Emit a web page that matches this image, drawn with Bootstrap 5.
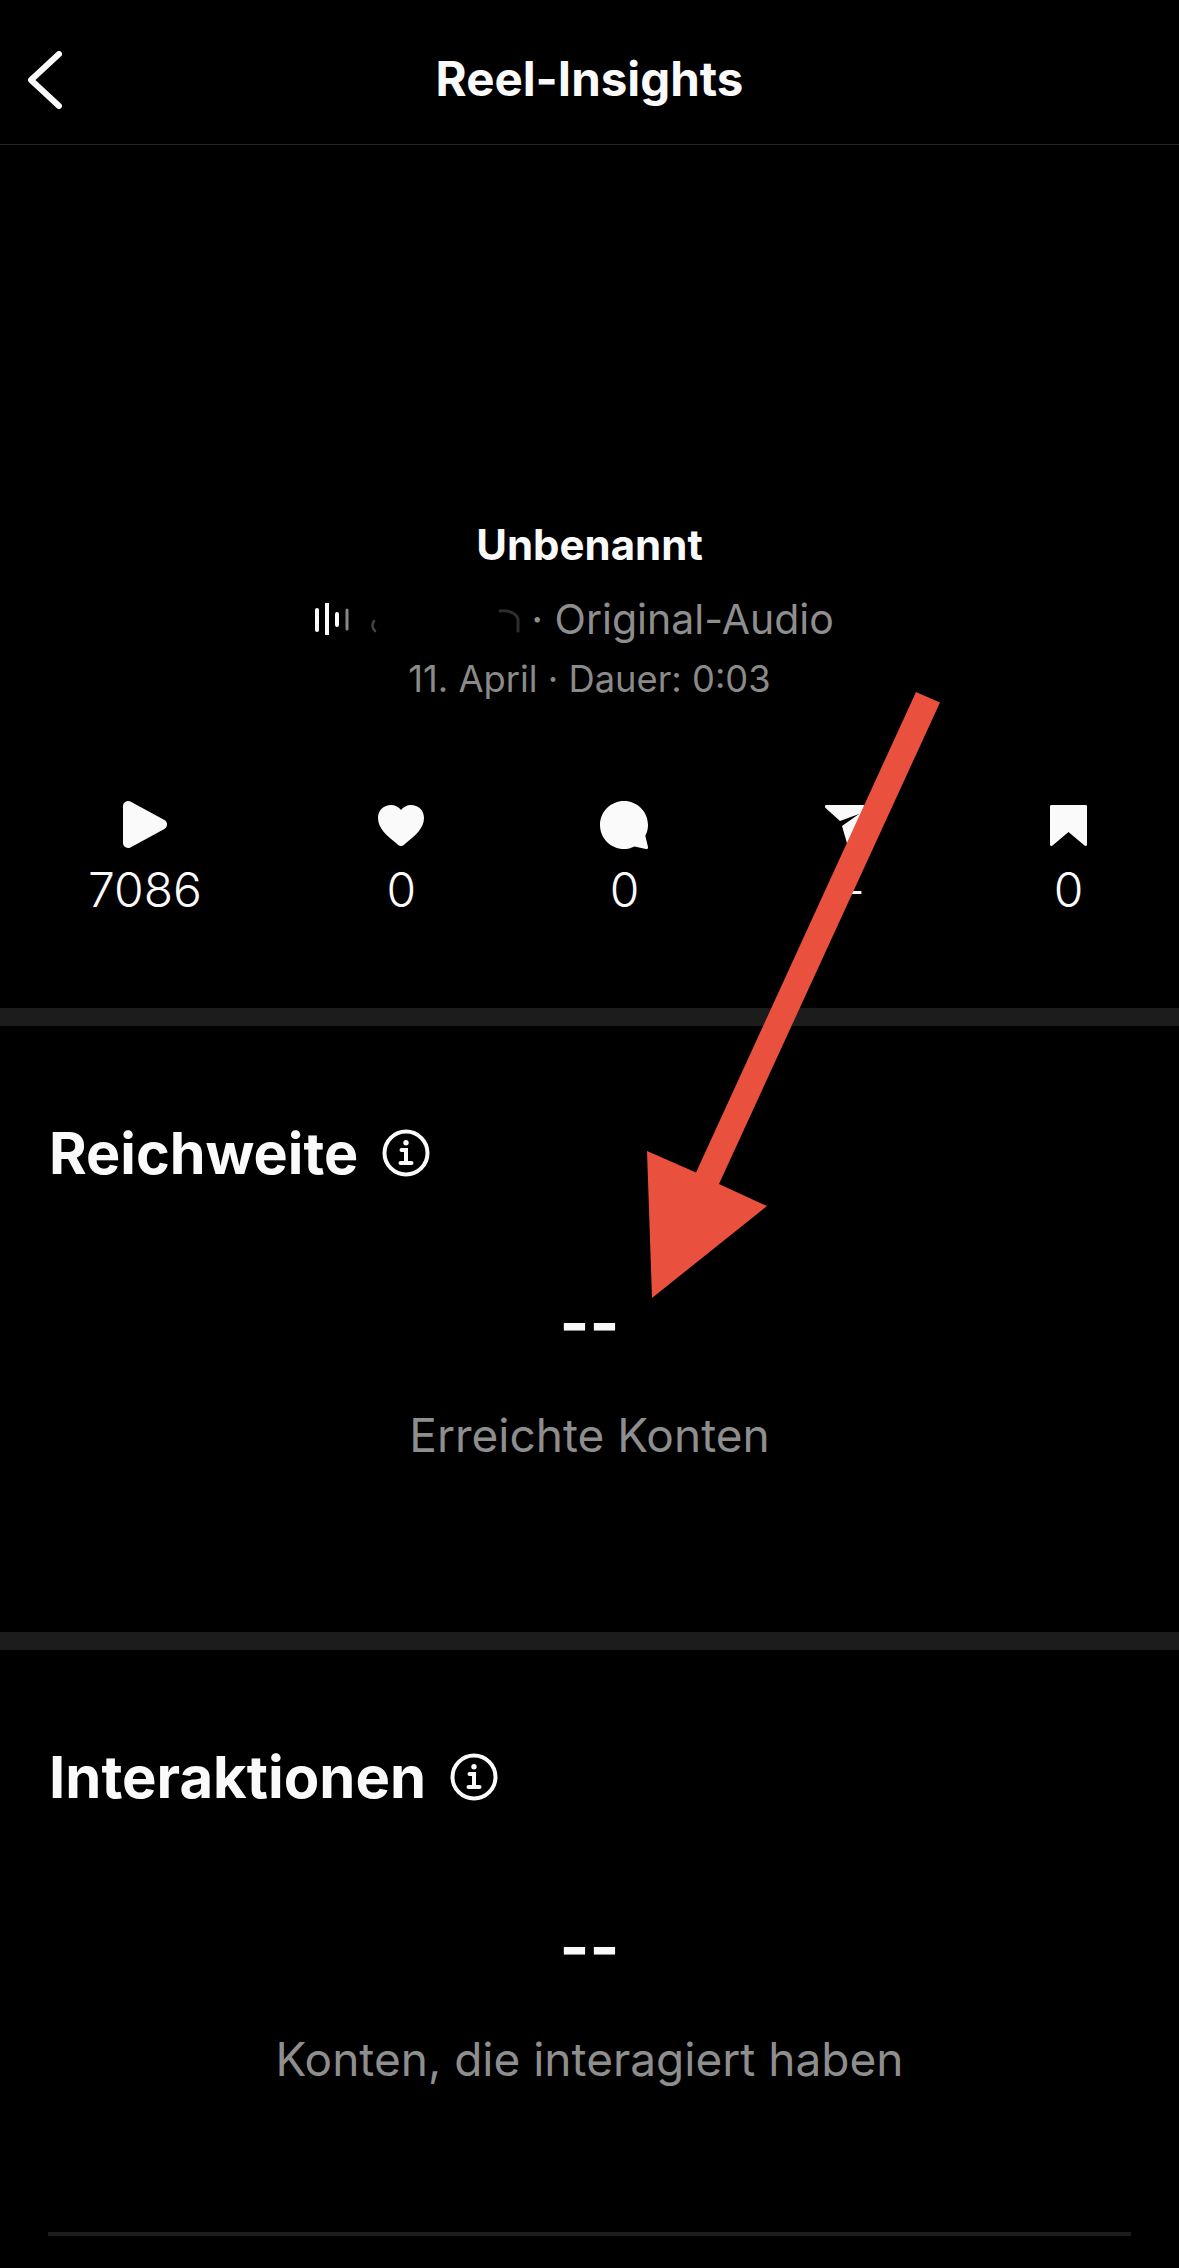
<!DOCTYPE html>
<html lang="de">
  <head>
    <meta charset="UTF-8" />
    <title>Reel-Insights</title>
    <link href="https://cdn.jsdelivr.net/npm/bootstrap@5.3.0/dist/css/bootstrap.min.css" rel="stylesheet" />
    <style>
      body {
        background: #000;
        color: #fafafa;
        font-family: Inter, "Liberation Sans", sans-serif;
        width: 1179px;
        height: 2268px;
        overflow: hidden;
      }
      .page-wrap { position: relative; }
      .top-bar {
        height: 145px;
        padding: 3px 0 0 28px;
        border-bottom: 1px solid #262626;
      }
      .top-bar svg { display: block; margin-top: 1px; }
      .top-title {
        font-size: 47.500px;
        line-height: 56px;
        font-weight: 700;
      }
      .reel-meta { padding-top: 376px; }
      .reel-title { font-size: 42px; line-height: 48px; font-weight: 700; }
      .audio-line {
        margin-top: 26px;
        padding-right: 30px;
        height: 48px;
        font-size: 41px;
        line-height: 48px;
        color: #8e8e8e;
      }
      .audio-line .audio-mark { width: 216px; height: 32px; }
      .date-line { margin-top: 14px; font-size: 36.300px; line-height: 44px; color: #8a8a8a; }
      .stat-row { padding: 96px 92px 0 88px; height: 307px; }
      .stat-item { height: 114px; }
      .stat-icon { height: 60px; }
      .stat-num { margin-top: 5px; font-size: 48px; line-height: 56px; font-weight: 300; }
      .band { height: 18px; background: #1c1c1c; }
      .metric-block { height: 606px; padding: 92px 49px 0; }
      .metric-block.is-last { height: 582px; }
      .metric-head { height: 70px; gap: 24px; font-size: 57.500px; line-height: 70px; font-weight: 700; }
      .is-last .metric-head { font-size: 58px; }
      .metric-dash { margin-top: 99px; font-size: 64px; line-height: 72px; font-weight: 700; }
      .metric-label { margin-top: 48px; font-size: 46px; line-height: 56px; color: #8e8e8e; }
      .end-rule { height: 4px; margin: 0 48px; background: #1c1c1c; }
      .red-arrow { position: absolute; left: 0; top: 0; pointer-events: none; }
    </style>
  </head>
  <body>
    <div class="page-wrap">
      <header class="top-bar position-relative d-flex align-items-start">
        <svg class="mt-5" width="34" height="58" viewBox="0 0 34 58" fill="none" stroke="#fafafa" stroke-width="6" stroke-linecap="round" stroke-linejoin="round"><path d="M31 3 3 29l28 26" /></svg>
        <div class="top-title position-absolute start-0 end-0 text-center mt-5">Reel-Insights</div>
      </header>

      <section class="reel-meta text-center">
        <div class="reel-title">Unbenannt</div>
        <div class="audio-line d-flex justify-content-center align-items-center">
          <svg class="audio-mark flex-shrink-0" viewBox="0 0 216 32" fill="none" stroke="#fff" stroke-width="4" stroke-linecap="round">
            <path d="M2 7v20M12 1v30M22 11v11" />
            <path d="M32 7v19" stroke="#888" stroke-width="3" />
            <path d="M59 18c-2 3-2 7 1 10" stroke="#444" stroke-width="2.500" />
            <path d="M185 8c9-1 16 2 18 8v12" stroke="#2e2e2e" stroke-width="3" />
          </svg>
          <span>· Original-Audio</span>
        </div>
        <div class="date-line">11. April · Dauer: 0:03</div>
      </section>

      <section class="stat-row d-flex justify-content-between text-center">
        <div class="stat-item">
          <div class="stat-icon d-flex justify-content-center pt-1">
            <svg width="44" height="47" viewBox="0 0 44 47" fill="#fafafa" stroke="#fafafa" stroke-width="10" stroke-linejoin="round"><path d="M5 5v37l34-18.500z" /></svg>
          </div>
          <div class="stat-num">7086</div>
        </div>
        <div class="stat-item">
          <div class="stat-icon d-flex justify-content-center pt-2">
            <svg width="46" height="41" viewBox="0 0 46 41" fill="#fafafa"><path d="M23 41c-2 0-3-1-5-3C9 31 0 23 0 13 0 5 6 0 13 0c4 0 8 2 10 5 2-3 6-5 10-5 7 0 13 5 13 13 0 10-9 18-18 25-2 2-3 3-5 3z" /></svg>
          </div>
          <div class="stat-num">0</div>
        </div>
        <div class="stat-item">
          <div class="stat-icon d-flex justify-content-center pt-1">
            <svg width="48" height="48" viewBox="0 0 48 48" fill="#fafafa"><path d="M24 0c13.300 0 24 10.700 24 24 0 4-1 7.500-2.700 10.800L48 46c.3 1.500-.8 2.300-2 2l-11.500-2.600C31 47 27.500 48 24 48 10.700 48 0 37.300 0 24S10.700 0 24 0z" /></svg>
          </div>
          <div class="stat-num">0</div>
        </div>
        <div class="stat-item">
          <div class="stat-icon d-flex justify-content-center pt-2">
            <svg width="49" height="42" viewBox="0 0 49 42" fill="#fafafa"><path d="M1 0h46c1.500 0 2 1.500 1.300 2.700L27 40c-1 2-4 2-4.500 0L17 21 34 9 15 16 .3 2.700C-.5 1.500 0 0 1 0z" /></svg>
          </div>
          <div class="stat-num">–</div>
        </div>
        <div class="stat-item">
          <div class="stat-icon d-flex justify-content-center pt-2">
            <svg width="37" height="41" viewBox="0 0 37 41" fill="#fafafa"><path d="M1.500 0h34c1 0 1.500.7 1.500 1.500v38c0 1.500-1.500 2-2.500 1L18.500 27 2.500 40.500c-1 1-2.500.5-2.500-1v-38C0 .7.500 0 1.500 0z" /></svg>
          </div>
          <div class="stat-num">0</div>
        </div>
      </section>

      <div class="band"></div>
      <section class="metric-block">
        <div class="metric-head d-flex align-items-center">
          <span>Reichweite</span>
          <svg width="48" height="48" viewBox="0 0 48 48" fill="none" stroke="#fafafa" stroke-linecap="round"><circle cx="24" cy="24" r="21.500" stroke-width="4" /><path d="M19.500 21h4.500v13M18.500 34h11" stroke-width="4" /><circle cx="24" cy="13.700" r="2.700" fill="#fafafa" stroke="none" /></svg>
        </div>
        <div class="metric-dash text-center">--</div>
        <div class="metric-label text-center">Erreichte Konten</div>
      </section>

      <div class="band"></div>
      <section class="metric-block is-last">
        <div class="metric-head d-flex align-items-center">
          <span>Interaktionen</span>
          <svg width="48" height="48" viewBox="0 0 48 48" fill="none" stroke="#fafafa" stroke-linecap="round"><circle cx="24" cy="24" r="21.500" stroke-width="4" /><path d="M19.500 21h4.500v13M18.500 34h11" stroke-width="4" /><circle cx="24" cy="13.700" r="2.700" fill="#fafafa" stroke="none" /></svg>
        </div>
        <div class="metric-dash text-center">--</div>
        <div class="metric-label text-center">Konten, die interagiert haben</div>
      </section>
      <div class="end-rule"></div>

      <svg class="red-arrow" width="1179" height="2268" viewBox="0 0 1179 2268"><path fill="#e9503e" d="M916 692 940 702.500 719 1184 767 1206 652 1298 647 1151 696 1172.600z" /></svg>
    </div>
    <script src="https://cdn.jsdelivr.net/npm/bootstrap@5.3.0/dist/js/bootstrap.bundle.min.js"></script>
  </body>
</html>
